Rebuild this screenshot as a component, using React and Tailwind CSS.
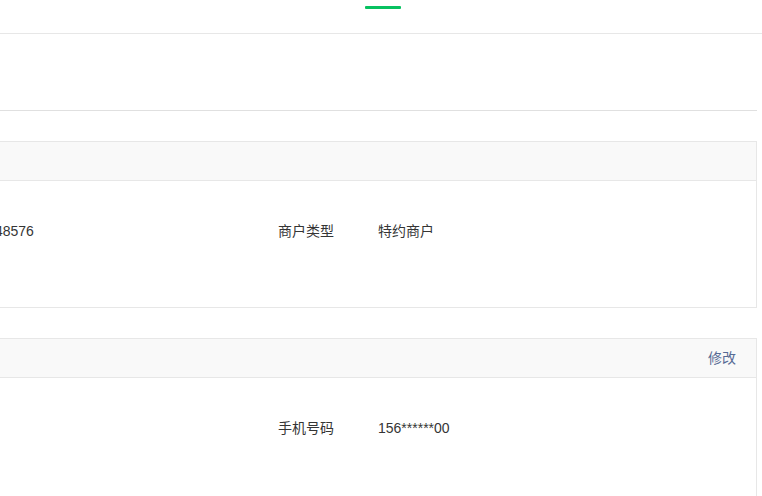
export default function App() {
  const font = { fontFamily: '"Liberation Sans", "Noto Sans CJK SC", sans-serif' };
  return (
    <div className="w-[762px] h-[496px] overflow-hidden bg-white text-[14px] text-[#353535]" style={font}>
      <div className="h-[34px] pt-[6px] border-b border-[#e7e7e7] w-full">
        <div className="ml-[365px] w-[36px] h-[3px] bg-[#07c160] rounded-[1px]" />
      </div>
      <div className="ml-[-145px] w-[902px]">
        <div className="h-[77px] border-b border-[#e0e0e0]" />
        <div className="mt-[30px] border border-[#e7e7e7]">
          <div className="h-[39px] bg-[#f9f9f9] border-b border-[#e7e7e7] flex items-center px-5" />
          <div className="h-[126px] pt-[40px] grid grid-cols-[422px_1fr]">
            <div className="flex h-[20px] items-center leading-[20px]">
              <span className="w-[100px]" />
              <span>1900048576</span>
            </div>
            <div className="flex h-[20px] items-center leading-[20px]">
              <span className="w-[100px]">商户类型</span>
              <span>特约商户</span>
            </div>
          </div>
        </div>
        <div className="mt-[30px] border border-[#e7e7e7]">
          <div className="h-[39px] bg-[#f9f9f9] border-b border-[#e7e7e7] flex items-center justify-end px-5">
            <span className="text-[#576b95]">修改</span>
          </div>
          <div className="h-[126px] pt-[40px] grid grid-cols-[422px_1fr]">
            <div className="flex h-[20px] items-center leading-[20px]" />
            <div className="flex h-[20px] items-center leading-[20px]">
              <span className="w-[100px]">手机号码</span>
              <span>156******00</span>
            </div>
          </div>
        </div>
      </div>
    </div>
  );
}
